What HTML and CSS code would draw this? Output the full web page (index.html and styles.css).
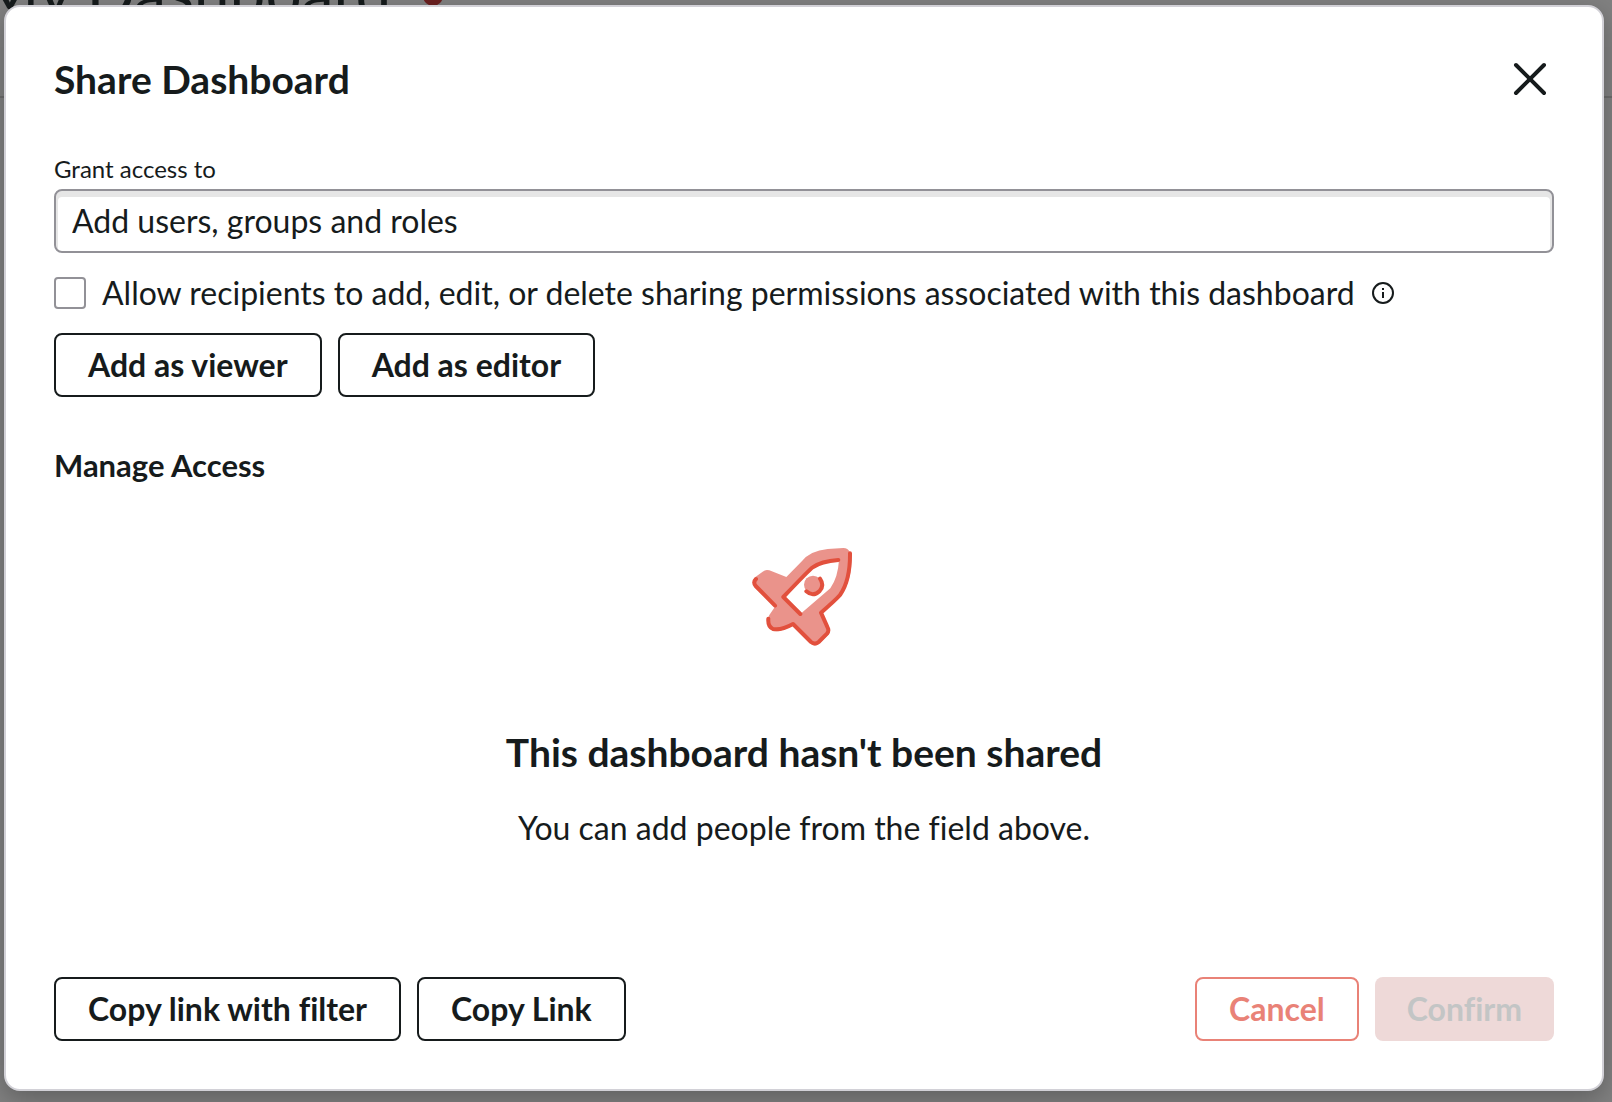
FILE: index.html
```html
<!DOCTYPE html>
<html lang="en">
<head>
<meta charset="utf-8">
<meta name="viewport" content="width=device-width, initial-scale=1">
<title>Share Dashboard</title>
<link rel="stylesheet" href="styles.css">
</head>
<body>
<div class="page">
  <header class="page-header" aria-hidden="true">
    <span class="page-title">My Dashboard</span>
    <svg class="page-mark" width="20" height="20" viewBox="0 0 20 20"><circle cx="10" cy="10" r="10" fill="#6b2020"/></svg>
  </header>
</div>
<main class="overlay">
  <section class="modal" role="dialog" aria-modal="true" aria-labelledby="share-title">
    <header class="modal-header">
      <h1 class="title" id="share-title">Share Dashboard</h1>
      <button class="close" type="button" aria-label="Close">
        <svg width="48" height="48" viewBox="0 0 48 48" fill="none" stroke="#161b1c" stroke-width="4" stroke-linecap="round"><path d="M10 10 38 38M38 10 10 38"/></svg>
      </button>
    </header>

    <div class="grant">
      <label class="field-label" for="grantees">Grant access to</label>
      <input class="field" id="grantees" type="text" placeholder="Add users, groups and roles">
      <div class="option">
        <input class="tick" id="allow" type="checkbox">
        <label for="allow">Allow recipients to add, edit, or delete sharing permissions associated with this dashboard</label>
        <svg class="info" width="24" height="24" viewBox="0 0 24 24" fill="none" stroke="#161b1c" stroke-width="2"><circle cx="12" cy="12" r="10"/><path d="M12 11v6M12 7v2"/></svg>
      </div>
      <div class="actions">
        <button class="btn" type="button">Add as viewer</button>
        <button class="btn" type="button">Add as editor</button>
      </div>
    </div>

    <h2 class="subtitle">Manage Access</h2>

    <div class="empty">
      <svg class="rocket" width="150" height="130" viewBox="-3 0 450 390" fill="none" stroke="#e2503d" stroke-width="12" stroke-linecap="round" stroke-linejoin="round">
        <path fill="#ea938b" stroke="none" fill-rule="evenodd" d="M70 160 Q67 149 76 141L98 125Q107 117 118 121L169 141 214 95Q240 62 293 57L340 54Q354 54 359 66L365 70Q366 155 333 195 320 212 273 248L298 298Q302 308 292 317L267 342Q255 352 243 342L189 282Q172 296 150 303 126 307 116 290 108 275 118 255L136 229ZM327 90Q275 92 245 114 235 122 160 201L211 252 301 175Q324 142 327 90Z"/>
        <circle cx="249" cy="164" r="27" fill="#ea938b" stroke="none"/>
        <path d="M78 147Q68 157 77 168L135 227M115 266Q113 290 129 297 153 302 189 282L243 336Q255 345 266 336L291 311Q298 303 293 293L273 248Q318 209 330 195 361 151 360 70M325 90Q273 94 248 112 240 117 160 201L211 252M270 146Q284 166 269 183 249 202 229 184"/>
      </svg>
      <h3 class="title">This dashboard hasn't been shared</h3>
      <p class="hint">You can add people from the field above.</p>
    </div>

    <footer class="modal-footer">
      <div class="actions">
        <button class="btn" type="button">Copy link with filter</button>
        <button class="btn" type="button">Copy Link</button>
      </div>
      <div class="actions">
        <button class="btn btn-cancel" type="button">Cancel</button>
        <button class="btn btn-confirm" type="button" disabled>Confirm</button>
      </div>
    </footer>
  </section>
</main>
</body>
</html>
```
FILE: styles.css
```css
*, *::before, *::after { box-sizing: border-box; }
body {
  margin: 0;
  background: #808080;
  color: #161b1c;
  font: 32px/40px Lato, "Liberation Sans", sans-serif;
  font-variant-ligatures: none;
}
h1, h2, h3, p { margin: 0; }
button, input { font: inherit; font-variant-ligatures: none; color: inherit; }

.page { position: absolute; inset: 0; overflow: hidden; }
.page-header {
  display: flex;
  align-items: flex-start;
  gap: 32px;
  height: 98px;
  border-bottom: 2px solid #6c6c6c;
}
.page-title { margin: -48px 0 0 -20px; font-size: 64px; line-height: 80px; }
.page-mark { margin-top: -14px; }

.overlay {
  position: relative;
  display: flex;
  min-height: 100vh;
  padding: 5px 8px 11px 4px;
}
.modal {
  flex: 1;
  display: flex;
  flex-direction: column;
  padding: 48px;
  background: #fff;
  border: 2px solid #d2d1d7;
  border-radius: 16px;
  box-shadow: 0 8px 24px rgba(0, 0, 0, .25);
}
.modal-header {
  display: flex;
  justify-content: space-between;
  align-items: center;
  height: 48px;
}
.title { font-size: 39px; line-height: 48px; font-weight: 700; }
.close { display: flex; padding: 0; border: 0; background: none; }

.grant { display: flex; flex-direction: column; margin-top: 50px; }
.field-label { font-size: 24px; line-height: 32px; }
.field {
  width: 100%;
  height: 64px;
  margin-top: 4px;
  padding: 0 16px 2px;
  border: 2px solid #929197;
  border-radius: 8px;
  background: #fff;
  box-shadow: inset 0 4px 0 2px #e6e6e6;
}
.field::placeholder { color: inherit; opacity: 1; }
.option { display: flex; align-items: center; margin-top: 20px; }
.tick {
  appearance: none;
  flex: none;
  width: 32px;
  height: 32px;
  margin: 0 16px 0 0;
  border: 2px solid #929197;
  border-radius: 4px;
  background: #fff;
}
.info { flex: none; margin-left: 16px; }
.actions { display: flex; gap: 16px; }
.grant .actions { margin-top: 20px; }
.btn {
  height: 64px;
  padding: 0 32px;
  border: 2px solid #161b1c;
  border-radius: 8px;
  background: #fff;
  font-weight: 700;
}
.btn-cancel { border-color: #e98277; color: #e98277; }
.btn-confirm { border: 0; background: #eed9d8; color: #c3c5c5; }

.subtitle { margin-top: 48px; font-size: 31px; line-height: 40px; }
.empty {
  display: flex;
  flex-direction: column;
  align-items: center;
  margin-top: 45px;
  text-align: center;
}
.empty .title { margin-top: 68px; }
.hint { margin-top: 32px; }
.modal-footer {
  display: flex;
  justify-content: space-between;
  margin-top: auto;
}
```
